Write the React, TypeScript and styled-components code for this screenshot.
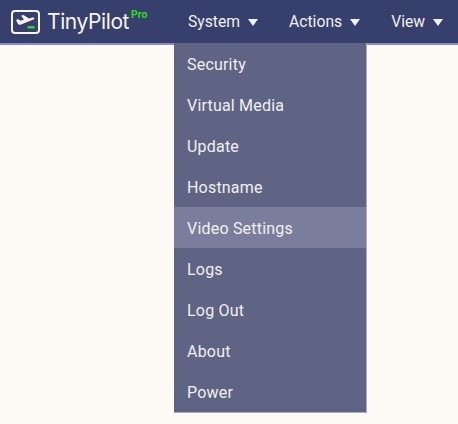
import * as React from 'react'
import styled, { createGlobalStyle } from 'styled-components'

const GlobalStyle = createGlobalStyle`
  html, body {
    margin: 0;
    padding: 0;
    background: #fdf9f4;
  }
  body {
    font-family: Roboto, "Liberation Sans", sans-serif;
    overflow: hidden;
  }
`

const Page = styled.div`
  width: 458px;
  height: 424px;
  overflow: hidden;
  background: #fdf9f4;
`

const NavBar = styled.nav`
  height: 43px;
  background: #373f6c;
  border-bottom: 2px solid #8d90a6;
  display: flex;
  align-items: center;
  padding-left: 11px;
`

const Brand = styled.div`
  display: flex;
  align-items: center;
  width: 177px;
  height: 43px;
  flex-shrink: 0;
`

const BrandName = styled.span`
  font-family: "Inter", sans-serif;
  color: #f6f5f3;
  font-size: 21px;
  font-weight: 400;
  margin-left: 7px;
  letter-spacing: -0.4px;
`

const ProBadge = styled.span`
  color: #36d42f;
  font-size: 10.5px;
  font-weight: 700;
  line-height: 1;
  align-self: flex-start;
  margin: 10px 0 0 2px;
`

const Menu = styled.div`
  display: flex;
  align-items: center;
  gap: 31px;
`

const MenuLabel = styled.div`
  display: flex;
  align-items: center;
  gap: 8px;
  color: #f1f0ef;
  font-size: 15.7px;
  white-space: nowrap;
`

const Caret = styled.span`
  width: 0;
  height: 0;
  border-left: 5px solid transparent;
  border-right: 5px solid transparent;
  border-top: 7px solid #f1f0ef;
  margin-top: 2px;
`

const Dropdown = styled.ul`
  position: absolute;
  top: 43px;
  left: 174px;
  width: 192px;
  margin: 0;
  padding: 0;
  list-style: none;
  background: #5f6484;
  border-right: 1px solid #a9acc0;
  border-bottom: 1px solid #a9acc0;
`

const DropdownItem = styled.li<{ $active?: boolean }>`
  height: 41px;
  box-sizing: border-box;
  padding: 1px 0 0 13px;
  display: flex;
  align-items: center;
  color: #f1f0ef;
  font-size: 16px;
  letter-spacing: 0.2px;
  background: ${(p) => (p.$active ? '#7a7e9c' : 'transparent')};
`

const items = ['Security', 'Virtual Media', 'Update', 'Hostname', 'Video Settings', 'Logs', 'Log Out', 'About', 'Power']

function Logo() {
  return (
    <svg width="29" height="24" viewBox="0 0 29 24" fill="none">
      <rect x="1" y="1" width="27" height="22" rx="3" stroke="#f6f5f3" strokeWidth="2" />
      <path d="M5 10l2-1 2.500 1.800L13 9.600 10 5.800 12.500 5l5.500 3.600 3.500-1c2-.4 2.500 1 1 2L10 14.500c-1.500.5-2.500.3-3-.5z" fill="#f6f5f3" />
      <rect x="16.500" y="16" width="7" height="2.500" fill="#36d42f" />
    </svg>
  )
}

export default function App() {
  return (
    <Page>
      <GlobalStyle />
      <NavBar>
        <Brand>
          <Logo />
          <BrandName>TinyPilot</BrandName>
          <ProBadge>Pro</ProBadge>
        </Brand>
        <Menu>
          {['System', 'Actions', 'View'].map((label) => (
            <MenuLabel key={label}>
              {label}
              <Caret />
            </MenuLabel>
          ))}
        </Menu>
      </NavBar>
      <Dropdown>
        {items.map((item) => (
          <DropdownItem key={item} $active={item === 'Video Settings'}>
            {item}
          </DropdownItem>
        ))}
      </Dropdown>
    </Page>
  )
}
